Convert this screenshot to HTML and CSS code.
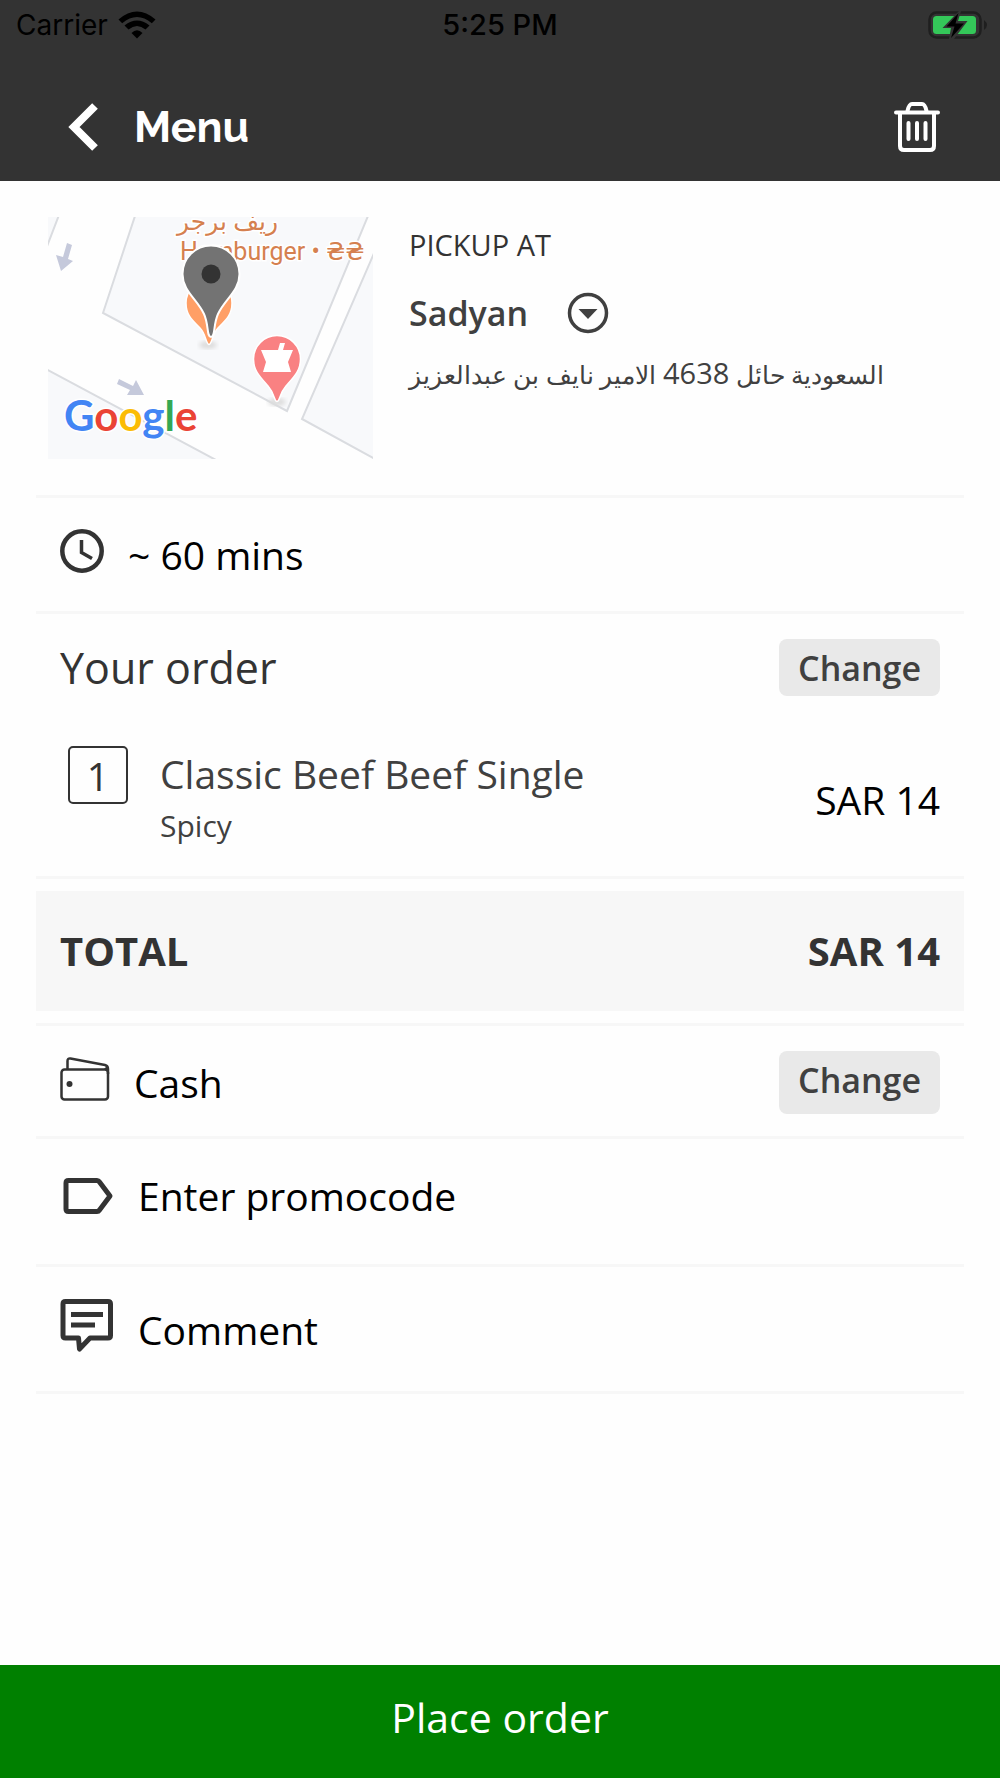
FILE: index.html
```html
<!DOCTYPE html>
<html lang="en">
<head>
    <meta charset="UTF-8">
    <meta name="viewport" content="width=device-width, initial-scale=1.0">
    <title>Your order</title>
    <link rel="stylesheet" href="styles.css">
</head>
<body>
    <header class="header">
        <!-- Status bar -->
        <div class="status-bar">
            <div class="carrier">
                <span>Carrier</span>
                <svg class="wifi" width="38" height="28" viewBox="0 0 38 28">
                    <path d="M19 27.500L13.500 22Q19 16.500 24.500 22Z"/>
                    <path d="M6.500 14.500Q19 4.500 31.500 14.500L27.500 18.500Q19 11.500 10.500 18.500Z"/>
                    <path d="M0.500 8.500Q19 -7.500 37.500 8.500L33.800 12.300Q19 -0.300 4.200 12.300Z"/>
                </svg>
            </div>
            <span class="time">5:25 PM</span>
            <div class="battery">
                <svg width="60" height="28" viewBox="0 0 60 28">
                    <rect x="1.500" y="1.500" width="51" height="25" rx="7" fill="none" stroke="#1f1f1f" stroke-width="2.500"/>
                    <path d="M56 9q3 2.500 3 5t-3 5z" fill="#1f1f1f"/>
                    <rect x="5" y="5" width="43" height="18" rx="3.500" fill="#34c759"/>
                    <path d="M31 0L14.500 17H23L21 28H26L39.500 10H30L33 0Z" fill="#333"/>
                    <path d="M30.500 2L18.500 15.500H26.500L23 27L36 12.500H27.500Z" fill="#000"/>
                </svg>
            </div>
        </div>

        <!-- Navigation -->
        <div class="nav">
            <button class="back" type="button">
                <svg width="30" height="48" viewBox="0 0 30 48" fill="none" stroke="#fff" stroke-width="8">
                    <path d="M27 3L6 24L27 45"/>
                </svg>
                <span>Menu</span>
            </button>
            <button class="trash" type="button" aria-label="Clear order">
                <svg width="46" height="52" viewBox="0 0 46 52" fill="none" stroke="#fff" stroke-width="4" stroke-linecap="round">
                    <path d="M2 11.500H44"/>
                    <path d="M13.500 10Q15 3 18 3H28Q31 3 32.500 10"/>
                    <path d="M6 12V45Q6 49 10 49H36Q40 49 40 45V12"/>
                    <path d="M14.500 22V38M23 22V38M31.500 22V38"/>
                </svg>
            </button>
        </div>
    </header>

    <main class="content">
        <!-- Pickup place -->
        <section class="pickup">
            <svg class="map" width="325" height="242" viewBox="0 0 325 242">
                <defs>
                    <filter id="soft"><feGaussianBlur stdDeviation="2"/></filter>
                </defs>
                <rect width="325" height="242" fill="#fefefe"/>
                <g fill="#f8f9fb" stroke="#dadce0" stroke-width="2">
                    <path d="M87 -1L55 96L239 194L320 -1Z"/>
                    <path d="M327 34L254 202L327 242Z"/>
                    <path d="M-2 152L168 243H-2Z"/>
                    <path d="M11 -2L-2 32V-2Z"/>
                </g>
                <g fill="#c5c9db">
                    <path d="M19 26L24 28L20 42L25 44L13 54L8 38L15 40Z"/>
                    <path d="M71 162L85 169L88 163L96 178L79 178L82 173L69 167Z"/>
                </g>
                <g class="place-name">
                    <text x="129" y="13">ريف برجر</text>
                    <text x="132" y="43">Hamburger • ₴₴</text>
                </g>
                <!-- pins -->
                <ellipse cx="160" cy="128" rx="9" ry="4" fill="#ddd" filter="url(#soft)"/>
                <ellipse cx="229" cy="185" rx="9" ry="4" fill="#ddd" filter="url(#soft)"/>
                <path d="M161 127.500C158 127.500 158 117 152 111C144 103 138 98 138 86A23 23 0 0 1 184 86C184 98 178 103 170 111C164 117 164 127.500 161 127.500Z" fill="#ff9f66" stroke="#fff" stroke-width="1.500"/>
                <path d="M163 120C158.500 120 161 108 156 97C149 82 134.500 74 134.500 57A28.500 28.500 0 0 1 191.500 57C191.500 74 177 82 170 97C165 108 167.500 120 163 120Z" fill="#737373" stroke="#fff" stroke-width="2"/>
                <circle cx="163" cy="57" r="9.500" fill="#333"/>
                <path d="M229 184.500C226 184.500 227 177 220 169C212 160 205.500 154 205.500 142A23.500 23.500 0 0 1 252.500 142C252.500 154 246 160 238 169C231 177 232 184.500 229 184.500Z" fill="#f98182" stroke="#fff" stroke-width="1.500"/>
                <path d="M213 133H230L232 126H237L235 133H245L240 145L243 155H215L218 145Z" fill="#fff"/>
                <text class="google" x="16" y="214"><tspan fill="#4285f4">G</tspan><tspan fill="#ea4335">o</tspan><tspan fill="#fbbc05">o</tspan><tspan fill="#4285f4">g</tspan><tspan fill="#34a853">l</tspan><tspan fill="#ea4335">e</tspan></text>
            </svg>
            <div class="place">
                <label class="place-label" for="place">PICKUP AT</label>
                <div class="place-select">
                    <select id="place">
                        <option>Sadyan</option>
                    </select>
                    <svg width="42" height="42" viewBox="0 0 42 42">
                        <circle cx="21" cy="21" r="18.500" fill="none" stroke="#404040" stroke-width="3.500"/>
                        <path d="M11.500 17H30.500L21 27Z" fill="#404040"/>
                    </svg>
                </div>
                <p class="address" lang="ar" dir="rtl">السعودية حائل <span class="postcode">4638</span> الامير نايف بن عبدالعزيز</p>
            </div>
        </section>

        <!-- Waiting time -->
        <section class="row">
            <svg class="icon-up" width="44" height="44" viewBox="0 0 44 44" fill="none" stroke="#333">
                <circle cx="22" cy="22" r="19.700" stroke-width="4.500"/>
                <path d="M21.500 11V23.500L32 29.500" stroke-width="3.500"/>
            </svg>
            <span class="wait">~ 60 mins</span>
        </section>

        <!-- Order -->
        <section class="order">
            <div class="order-head">
                <h1>Your order</h1>
                <button class="change" type="button">Change</button>
            </div>
            <div class="item">
                <span class="count">1</span>
                <div class="item-info">
                    <p class="item-name">Classic Beef Beef Single</p>
                    <p class="item-note">Spicy</p>
                </div>
                <span class="price">SAR 14</span>
            </div>
        </section>

        <section class="total">
            <span>TOTAL</span>
            <span>SAR 14</span>
        </section>

        <!-- Payment, promocode, comment -->
        <section class="row payment">
            <svg class="icon-up" width="50" height="44" viewBox="0 0 50 44" fill="none" stroke="#333" stroke-width="2.500">
                <rect x="1.500" y="12.500" width="46.500" height="30" rx="3"/>
                <path d="M7.500 12V4Q7.500 1 10.500 1.500L45 8Q48 8.700 48 12V17M45 12.500L48 10"/>
                <circle cx="9.500" cy="27" r="3" fill="#333" stroke="none"/>
            </svg>
            <span>Cash</span>
            <button class="change change-tall" type="button">Change</button>
        </section>
        <button class="row promo" type="button">
            <svg width="54" height="36" viewBox="0 0 54 36" fill="none" stroke="#333" stroke-width="5" stroke-linejoin="round">
                <path d="M8.500 2.500H37Q38.500 2.500 39.500 4L50 18L39.500 32Q38.500 33.500 37 33.500H8.500Q6 33.500 6 31V5Q6 2.500 8.500 2.500Z"/>
            </svg>
            <span>Enter promocode</span>
        </button>
        <button class="row comment" type="button">
            <svg class="icon-up" width="54" height="53" viewBox="0 0 54 53" fill="none" stroke="#333" stroke-width="5">
                <path d="M5.500 2.500H48Q50.500 2.500 50.500 5V36.500Q50.500 39 48 39H30L19.500 50L18.500 39H5.500Q3 39 3 36.500V5Q3 2.500 5.500 2.500Z" stroke-linejoin="round"/>
                <path d="M11 15.500H43M11 26H35"/>
            </svg>
            <span>Comment</span>
        </button>
    </main>

    <button class="place-order" type="button">Place order</button>
</body>
</html>
```
FILE: styles.css
```css
* {
    box-sizing: border-box;
}

body {
    margin: 0;
    min-height: 100vh;
    display: flex;
    flex-direction: column;
    background-color: #fefefe;
    color: #000;
    font-family: "Open Sans", "Noto Sans", sans-serif;
    font-size: 39px;
    line-height: 56px;
}

h1, p {
    margin: 0;
    font-weight: 400;
}

button, select {
    margin: 0;
    padding: 0;
    border: none;
    background: none;
    color: inherit;
    font: inherit;
    cursor: pointer;
}

svg {
    display: block;
    flex: none;
}

/* Header */
.header {
    background-color: #333;
    padding-bottom: 14px;
}

.status-bar {
    display: grid;
    grid-template-columns: 1fr auto 1fr;
    align-items: center;
    padding: 8px 12px;
    color: #000;
    font-family: Inter, sans-serif;
    font-size: 28px;
    line-height: 34px;
}

.carrier {
    display: flex;
    align-items: center;
    gap: 10px;
    padding-left: 4px;
}

.time {
    font-size: 29px;
    font-weight: 500;
}

.battery {
    justify-self: end;
}

.nav {
    display: flex;
    justify-content: space-between;
    align-items: center;
    padding: 37px 60px 0 68px;
}

.back {
    display: flex;
    align-items: center;
    gap: 36px;
    color: #fff;
    font-family: Raleway, Lato, sans-serif;
    font-size: 43px;
    font-weight: 700;
    line-height: 80px;
}

/* Pickup */
.content {
    flex: 1;
    padding: 0 36px;
}

.pickup {
    display: flex;
    gap: 36px;
    padding: 36px 12px;
    border-bottom: 3px solid #f7f7f7;
    color: #404040;
}

.place-name {
    fill: #d5804f;
    stroke: #fff;
    stroke-width: 3px;
    paint-order: stroke;
    font-family: Roboto, "DejaVu Sans", sans-serif;
    font-size: 25px;
}

.google {
    font-family: Lato, sans-serif;
    font-size: 42px;
    font-weight: 700;
    stroke: #fff;
    stroke-width: 3px;
    paint-order: stroke;
}

.place {
    display: flex;
    flex-direction: column;
    align-items: flex-start;
    padding-top: 8px;
    font-size: 29px;
    line-height: 40px;
}

.place-label {
    color: #333;
}

.place-select {
    display: flex;
    align-items: center;
    gap: 38px;
    padding: 20px 0 12px;
}

.place-select select {
    appearance: none;
    font-size: 34px;
    font-weight: 600;
    line-height: 56px;
}

.address {
    font-size: 25px;
}

.postcode {
    font-size: 29px;
}

/* Rows */
.row {
    display: flex;
    align-items: center;
    gap: 24px;
    width: 100%;
    padding: 29px 24px 28px;
    border-bottom: 3px solid #f7f7f7;
    text-align: left;
}

.icon-up {
    margin-bottom: 8px;
}

.order {
    padding: 25px 24px 26px;
    border-bottom: 3px solid #f7f7f7;
}

.order-head {
    display: flex;
    justify-content: space-between;
    align-items: center;
}

.order-head h1 {
    color: #333;
    font-size: 43px;
}

.change {
    height: 57px;
    padding: 0 19px;
    border-radius: 8px;
    background-color: #e9e9e9;
    color: #404040;
    font-size: 34px;
    font-weight: 600;
}

.change-tall {
    height: 63px;
    margin-left: auto;
    padding-bottom: 6px;
}

.item {
    display: flex;
    align-items: center;
    gap: 32px;
    padding: 50px 0 0 8px;
}

.count {
    align-self: flex-start;
    width: 60px;
    height: 58px;
    border: 2px solid #333;
    border-radius: 5px;
    color: #333;
    text-align: center;
}

.item-info {
    flex: 1;
    color: #404040;
}

.item-name {
    font-size: 39px;
}

.item-note {
    font-size: 30px;
    line-height: 48px;
}

.price {
    padding-top: 4px;
}

.total {
    display: flex;
    justify-content: space-between;
    margin: 12px 0;
    padding: 32px 24px;
    background-color: #f7f7f7;
    color: #333;
    font-size: 40px;
    font-weight: 700;
}

.payment {
    border-top: 3px solid #f7f7f7;
    padding: 25px 24px 22px;
}

.promo {
    padding: 29px 24px 40px;
}

.comment {
    padding: 32px 24px 31px;
}

/* Footer */
.place-order {
    padding: 24px 0 32px;
    background-color: #008000;
    color: #fff;
    font-size: 41px;
    line-height: 57px;
}
```
